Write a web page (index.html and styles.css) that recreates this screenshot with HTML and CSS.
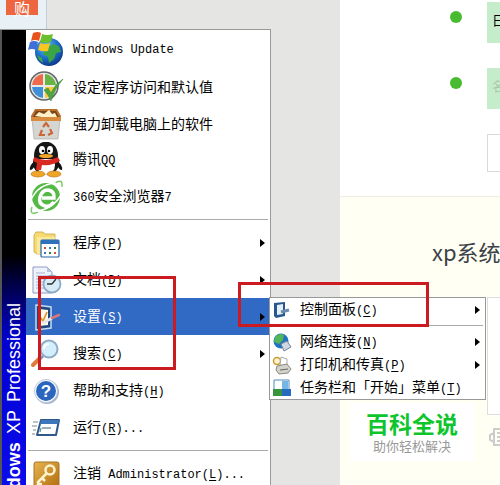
FILE: index.html
```html
<!DOCTYPE html>
<html lang="zh-CN">
    <head>
        <meta charset="utf-8">
        <title>xp系统</title>
        <link rel="stylesheet" href="styles.css">
    </head>
    <body>
        <div class="page">
            <div class="side">
                <div class="tab"><button class="buy">购</button></div>
            </div>
            <div class="content">
                <div class="steps">
                    <div class="step"><span class="dot"></span><div class="step_box">日</div></div>
                    <div class="step"><span class="dot"></span><div class="step_box faded">名</div></div>
                    <div class="step"><div class="step_box blank"></div></div>
                </div>
                <div class="article">
                    <h2 class="title">xp系统</h2>
                    <div class="panel"></div>
                    <svg class="gear" width="18" height="20" viewBox="0 0 18 20" fill="none" stroke="#ccc" stroke-width="2">
                        <path d="M6 2h9v16H6zM6 6L2 8v5l4 2M9 6h6M9 10h6M9 14h6"/>
                    </svg>
                </div>
            </div>
        </div>

        <div class="menu start">
            <div class="banner"><p class="banner_text"><b>Windows</b> <span class="xp">XP</span> Professional</p></div>
            <div class="list">
                <button class="item">
                    <svg class="icon" viewBox="0 0 36 36">
                        <defs>
                            <radialGradient id="globe" cx=".4" cy=".3" r=".8"><stop offset="0" stop-color="#6fc4f5"/><stop offset=".5" stop-color="#1c70cc"/><stop offset="1" stop-color="#0a2a78"/></radialGradient>
                        </defs>
                        <circle cx="21" cy="21" r="14" fill="url(#globe)"/>
                        <path d="M17 18l8-5 6 2 2 6-5 1-2 6-5 4-1-6-5-3zM9 24l5 3 1 5-4-3z" fill="#3ba545"/>
                        <path d="M5 2q5-2 8 0l-2 8q-4-2-8 0z" fill="#e8521e"/>
                        <path d="M14 3q5 2 11 0l-2 8q-6 2-11 0z" fill="#6bbf2c"/>
                        <path d="M2 11q4-2 8 0l-2 8q-4-2-8 0z" fill="#3f70d8"/>
                        <path d="M12 12q5 2 10 0l-2 8q-5 1-10-1z" fill="#f8c521"/>
                    </svg>
                    <span><i>Windows Update</i></span>
                </button>
                <button class="item">
                    <svg class="icon" viewBox="0 0 36 36">
                        <circle cx="16" cy="18" r="14" fill="#e8e8e8" stroke="#62666b" stroke-width="1.5"/>
                        <path d="M15 17V6A12 12 0 0 0 4 17z" fill="#ed6a4a"/>
                        <path d="M17 17V6a12 12 0 0 1 11 11z" fill="#67b445"/>
                        <path d="M15 19H4a12 12 0 0 0 11 11z" fill="#3f8ed8"/>
                        <path d="M17 19h11a12 12 0 0 1-11 11z" fill="#f9cc35"/>
                        <path d="M16 22l4-2 3 5q4-9 12-14-8 9-12 22-3-7-7-11z" fill="#4ea640" stroke="#2f7d2c" stroke-width=".5"/>
                    </svg>
                    <span>设定程序访问和默认值</span>
                </button>
                <button class="item">
                    <svg class="icon" viewBox="0 0 36 36">
                        <path d="M4 14h28l-2 20H6z" fill="#d5d5d2" stroke="#aaa" stroke-width=".7"/>
                        <path d="M7 4h22l4 7v5H3v-5z" fill="#b8702c"/>
                        <path d="M8 6h20l3 6H5z" fill="#7a4618"/>
                        <path d="M7 11l4-4 5 2 5-4 3 4 3-1 2 4-8 1-7-1z" fill="#fff1c8"/>
                        <path d="M3 12h30v4H3z" fill="#d88b3c"/>
                        <path d="M15 22l3-4 3 4M22 24l2 4-4 2M17 30h-5l2-5" fill="none" stroke="#c96838" stroke-width="2.2"/>
                    </svg>
                    <span>强力卸载电脑上的软件</span>
                </button>
                <button class="item">
                    <svg class="icon" viewBox="0 0 36 36">
                        <path d="M7 19q-6 4-5 9 3 0 5-5zM29 19q6 4 5 9-3 0-5-5z" fill="#111"/>
                        <ellipse cx="18" cy="21" rx="13" ry="12" fill="#151515"/>
                        <ellipse cx="18" cy="23" rx="9" ry="10" fill="#fff"/>
                        <path d="M6 14C6-5 30-5 30 14v3H6z" fill="#171717"/>
                        <ellipse cx="14" cy="8" rx="3" ry="4" fill="#fff"/>
                        <ellipse cx="22" cy="8" rx="3" ry="4" fill="#fff"/>
                        <circle cx="15" cy="9" r="1.3"/><circle cx="21" cy="9" r="1.3"/>
                        <ellipse cx="18" cy="14" rx="7" ry="2" fill="#f0a526"/>
                        <path d="M6 15q12 6 24 0l2 4q-8 5-18 4l-1 5H8l1-7-4-2z" fill="#d92a22"/>
                        <ellipse cx="10" cy="32" rx="7" ry="3" fill="#f0a526" stroke="#b46c12" stroke-width=".6"/>
                        <ellipse cx="26" cy="32" rx="7" ry="3" fill="#f0a526" stroke="#b46c12" stroke-width=".6"/>
                    </svg>
                    <span>腾讯<i>QQ</i></span>
                </button>
                <button class="item">
                    <svg class="icon" viewBox="0 0 36 36">
                        <circle cx="18" cy="18" r="14" fill="#56b947"/>
                        <path d="M4 28Q1 37 10 33M27 4q8-5 7 4" fill="none" stroke="#7bcb68" stroke-width="1.5"/>
                        <path d="M3 21Q10 5 28 4M8 32Q24 31 33 16" fill="none" stroke="#fff" stroke-width="1.5"/>
                        <path d="M26 23q-4 5-9 4-7-2-5-9 2-7 8-7 7 1 6 8H14" fill="none" stroke="#fff" stroke-width="3.5"/>
                    </svg>
                    <span><i>360</i>安全浏览器<i>7</i></span>
                </button>
                <hr class="line">
                <button class="item more">
                    <svg class="icon" viewBox="0 0 36 36">
                        <path d="M6 10l2-3h7l2 2h10v20H9l-3-2z" fill="#f5da72" stroke="#c8a441" stroke-width=".8"/>
                        <path d="M9 12h18v17H9z" fill="#fbe99b"/>
                        <rect x="13" y="15" width="18" height="17" rx="1" fill="#fff" stroke="#2563a9" stroke-width="1.2"/>
                        <path d="M13 15h18v4H13z" fill="#2f70bb"/>
                        <path d="M16 22h2v2h-2zM26 27h2v2h-2z" fill="#d05040"/>
                        <path d="M21 22h2v2h-2zM16 27h2v2h-2z" fill="#3578c8"/>
                        <path d="M26 22h2v2h-2zM21 27h2v2h-2z" fill="#35793b"/>
                    </svg>
                    <span>程序<i>(<u>P</u>)</i></span>
                </button>
                <button class="item more">
                    <svg class="icon" viewBox="0 0 36 36">
                        <path d="M5 5h14l5 5v21H5z" fill="#eef2fc" stroke="#8e9bc2"/>
                        <path d="M19 5v5h5z" fill="#b7c3de"/>
                        <path d="M8 11h9M8 14h12M8 17h8M8 20h7M8 23h7M8 26h8" stroke="#a7b2d3"/>
                        <circle cx="24" cy="22" r="8.5" fill="#d7ecf7" stroke="#8cadc5" stroke-width="1.8"/>
                        <path d="M24 22l4-5M24 22h-5" stroke="#333" stroke-width="1.3"/>
                    </svg>
                    <span>文档<i>(<u>D</u>)</i></span>
                </button>
                <button class="item more active">
                    <svg class="icon" viewBox="0 0 36 36">
                        <path d="M8 6l15 2v21L8 31z" fill="#1e4880" stroke="#c8d9f4" stroke-width="1.5"/>
                        <path d="M11 10l9 1v15l-9 1z" fill="#fffbe9"/>
                        <path d="M12 18l3 4 4-9" fill="none" stroke="#d99c39" stroke-width="1.8"/>
                        <path d="M15 24l9-5" stroke="#e4e8ee" stroke-width="3"/>
                        <path d="M24 19l7-3" stroke="#d77878" stroke-width="2.5" stroke-linecap="round"/>
                    </svg>
                    <span>设置<i>(<u>S</u>)</i></span>
                </button>
                <button class="item more">
                    <svg class="icon" viewBox="0 0 36 36">
                        <path d="M15 20l-4 4" stroke="#8298b5" stroke-width="3"/>
                        <path d="M11 23l-6 6" stroke="#e17a3a" stroke-width="4" stroke-linecap="round"/>
                        <circle cx="21" cy="13" r="8.5" fill="#d3effb" stroke="#91abc8" stroke-width="2"/>
                        <path d="M16 13q0-5 5-5" fill="none" stroke="#fff" stroke-width="2"/>
                    </svg>
                    <span>搜索<i>(<u>C</u>)</i></span>
                </button>
                <button class="item">
                    <svg class="icon" viewBox="0 0 36 36">
                        <circle cx="19" cy="19" r="12" fill="#a5b4ca"/>
                        <circle cx="18" cy="18" r="11.5" fill="#fff" stroke="#b9c6da"/>
                        <circle cx="18" cy="18" r="10" fill="#2b66be"/>
                        <text x="18" y="24" class="mark">?</text>
                    </svg>
                    <span>帮助和支持<i>(<u>H</u>)</i></span>
                </button>
                <button class="item">
                    <svg class="icon" viewBox="0 0 36 36">
                        <path d="M13 10h18l-3 15H9z" fill="#fff" stroke="#2e5989" stroke-width="2" stroke-linejoin="round"/>
                        <path d="M13 10h18l-1 4H12z" fill="#3c76bb"/>
                        <path d="M14 18h9M13 18l-1 4" stroke="#7597a0" stroke-width="1.4"/>
                        <path d="M5 12h5M4 16h5M5 20h3M4 24h3" stroke="#7d8590" stroke-width="1.2"/>
                    </svg>
                    <span>运行<i>(<u>R</u>)...</i></span>
                </button>
                <hr class="line">
                <button class="item">
                    <svg class="icon" viewBox="0 0 36 36">
                        <defs>
                            <linearGradient id="gold" x2="1" y2="1"><stop offset="0" stop-color="#e6b550"/><stop offset="1" stop-color="#b26d10"/></linearGradient>
                        </defs>
                        <rect x="6" y="6" width="25" height="25" rx="2" fill="url(#gold)" stroke="#a77424"/>
                        <circle cx="22" cy="14" r="4.5" fill="none" stroke="#fff4cf" stroke-width="2.5"/>
                        <path d="M19 17l-9 9v2h4M14 22l3 3" fill="none" stroke="#fff4cf" stroke-width="2.5"/>
                    </svg>
                    <span>注销<i> Administrator(<u>L</u>)...</i></span>
                </button>
            </div>
        </div>

        <div class="menu sub">
            <button class="item more">
                <svg class="icon" viewBox="0 0 20 20">
                    <path d="M2 3l11-1v14l-9 2-2-2z" fill="#28578f"/>
                    <path d="M5 5l6-1v10l-6 1z" fill="#e4effa"/>
                    <path d="M9 12l8-2" stroke="#6d8baa" stroke-width="3"/>
                </svg>
                <span>控制面板<i>(<u>C</u>)</i></span>
            </button>
            <hr class="line">
            <button class="item more">
                <svg class="icon" viewBox="0 0 20 20">
                    <circle cx="9" cy="9" r="7.5" fill="#2272c3"/>
                    <path d="M3 5q5-5 9-2l-1 5-4 4-5-2z" fill="#52b856"/>
                    <path d="M9 12l6-3 4 6-7 4z" fill="#cfd8e2" stroke="#718299"/>
                </svg>
                <span>网络连接<i>(<u>N</u>)</i></span>
            </button>
            <button class="item more">
                <svg class="icon" viewBox="0 0 20 20">
                    <circle cx="5" cy="6" r="3.5" fill="#fff6cf" stroke="#c99b35" stroke-width="1.5"/>
                    <path d="M9 2l6 2v7H8z" fill="#fff" stroke="#aaa"/>
                    <path d="M5 11l10-2 4 5-3 4-9 1-3-4z" fill="#d4d3cb" stroke="#8b8a80"/>
                    <path d="M8 15l8-1" stroke="#666"/>
                </svg>
                <span>打印机和传真<i>(<u>P</u>)</i></span>
            </button>
            <button class="item">
                <svg class="icon" viewBox="0 0 20 20">
                    <path d="M2 2h15v10H2z" fill="#fff" stroke="#4e8abd"/>
                    <path d="M10 3h6v9h-6z" fill="#75b6e6"/>
                    <path d="M1 11h18v7H1z" fill="#276bc0"/>
                    <path d="M1 11h9v7H1z" fill="#38953d"/>
                </svg>
                <span>任务栏和「开始」菜单<i>(<u>T</u>)</i></span>
            </button>
        </div>

        <div class="frame frame_settings"></div>
        <div class="frame frame_panel"></div>

        <div class="stamp">
            <p class="stamp_name">百科全说</p>
            <p class="stamp_slogan">助你轻松解决</p>
        </div>
    </body>
</html>
```

FILE: styles.css
```css
* {
    box-sizing: border-box;
}
body {
    margin: 0px;
    height: 100vh;
    overflow: hidden;
    position: relative;
    font-family: "Noto Sans CJK SC", sans-serif;
}
p, h2 {
    margin: 0px;
}

/* page in the background */
.page {
    display: flex;
    min-height: 100vh;
}
.side {
    flex: 0 0 340px;
    background: #e5e5e4;
}
.tab {
    width: 47px;
    height: 29px;
    padding-left: 6px;
    background: #e8f1f5;
    border-right: 1px solid #c5ced3;
}
.buy {
    display: block;
    width: 32px;
    height: 15px;
    padding: 0px;
    border: 0px;
    background: #ee6640;
    color: white;
    font: 16px/10px "Noto Sans CJK SC", sans-serif;
}
.content {
    flex: 1;
    display: flex;
    flex-direction: column;
    background: white;
}
.steps {
    display: flex;
    flex-direction: column;
    gap: 25px;
    padding: 2px 0px 24px;
}
.step {
    display: flex;
    padding-left: 110px;
}
.dot {
    width: 12px;
    height: 12px;
    margin-top: 9px;
    margin-right: 25px;
    border-radius: 50%;
    background: #48bb30;
}
.step_box {
    flex: 1;
    height: 41px;
    padding-left: 5px;
    overflow: hidden;
    background: #c6edcb;
    font-size: 13px;
    line-height: 36px;
}
.faded {
    color: #a9c9ad;
}
.blank {
    height: 38px;
    margin-left: 37px;
    background: white;
    border: 1px solid #d9d9d9;
}
.article {
    flex: 1;
    overflow: hidden;
    background: #fffff3;
    border-top: 1px solid #ededE6;
}
.title {
    padding: 36px 0px 0px 92px;
    white-space: nowrap;
    font-size: 22px;
    font-weight: normal;
    line-height: 36px;
    color: #3c4248;
}
.panel {
    height: 118px;
    margin: 28px 0px 12px 147px;
    background: white;
    border: 1px solid #ddd;
    border-right: 0px;
}
.gear {
    display: block;
    margin-left: 148px;
}

/* menus */
.menu {
    position: absolute;
    background: white;
    border: 1px solid #999;
}
.start {
    left: 0px;
    top: 29px;
    width: 271px;
    display: flex;
    border-left: 0px;
}
.sub {
    left: 269px;
    top: 297px;
    width: 217px;
}
.banner {
    flex: 0 0 26px;
    display: flex;
    border-left: 2px solid #555;
    background: linear-gradient(black 225px, #0000d0 310px, #0c0cee);
}
.banner_text {
    height: 461px;
    padding-bottom: 273px;
    display: flex;
    justify-content: flex-end;
    gap: 8px;
    writing-mode: vertical-rl;
    transform: rotate(180deg);
    white-space: nowrap;
    font: 18px/24px "Liberation Sans", sans-serif;
    color: white;
}
.list {
    flex: 1;
}
.item {
    display: flex;
    align-items: center;
    width: 100%;
    height: 37px;
    padding: 0px 5px 0px 2px;
    gap: 9px;
    border: 0px;
    background: none;
    white-space: nowrap;
    font: 14px/20px "Noto Sans CJK SC", sans-serif;
    color: black;
}
.item i {
    font: 12px/20px "Liberation Mono", monospace;
    white-space: pre;
}
.item u {
    text-underline-offset: 2px;
}
.icon {
    flex: none;
    width: 36px;
    height: 36px;
}
.mark {
    font: bold 17px "Liberation Sans", sans-serif;
    text-anchor: middle;
    fill: white;
}
.more::after {
    content: "";
    margin-left: auto;
    border: 4px solid transparent;
    border-left: 5px solid black;
    border-right: 0px;
}
.active {
    background: #316ac5;
    color: white;
}
.line {
    height: 1px;
    margin: 4px 2px;
    border: 0px;
    background: #aaa;
}
.sub .item {
    height: 23px;
    gap: 8px;
}
.sub .icon {
    width: 20px;
    height: 20px;
}

/* red marks over the menus */
.frame {
    position: absolute;
    border: 3px solid #cc1b20;
}
.frame_settings {
    left: 38px;
    top: 276px;
    width: 138px;
    height: 94px;
}
.frame_panel {
    left: 238px;
    top: 282px;
    width: 191px;
    height: 45px;
}

.stamp {
    position: absolute;
    left: 350px;
    top: 403px;
    width: 124px;
    padding: 6px 0px;
    background: white;
    text-align: center;
}
.stamp_name {
    font-size: 23px;
    font-weight: bold;
    line-height: 28px;
    color: #0fc52e;
}
.stamp_slogan {
    font-size: 13px;
    line-height: 18px;
    color: #999;
}
```
